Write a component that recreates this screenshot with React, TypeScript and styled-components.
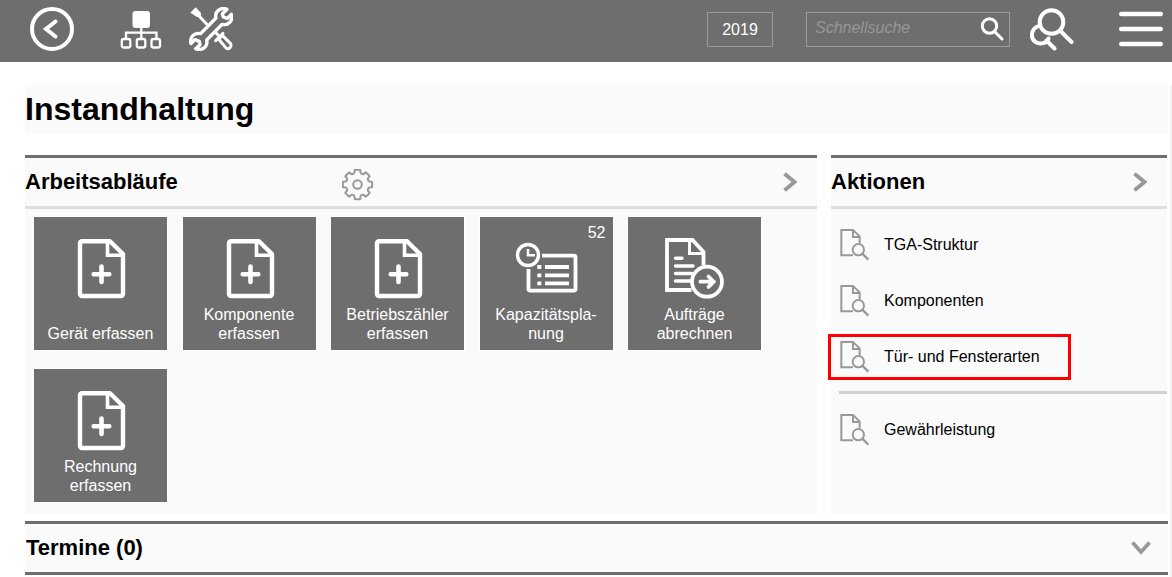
import React from 'react';
import styled, { createGlobalStyle } from 'styled-components';

const GREY = '#6e6e6e';
const PANEL = '#fafafa';
const MUTED = '#999999';

const GlobalStyle = createGlobalStyle`
  *, *::before, *::after { box-sizing: border-box; }
  body {
    margin: 0;
    background: #ffffff;
    color: #000000;
    font-family: "Liberation Sans", Arial, Helvetica, sans-serif;
    font-size: 16px;
  }
  button, input { font: inherit; }
  h1, h2 { margin: 0; }
`;

const Page = styled.div`
  display: flex;
  flex-direction: column;
  min-height: 100vh;
`;

const TopBar = styled.header`
  display: flex;
  align-items: center;
  height: 62px;
  padding: 0 9px 4px 30px;
  background: ${GREY};
`;

const BarGroup = styled.div<{ $gap: number; $push?: boolean }>`
  display: flex;
  align-items: center;
  gap: ${(p) => p.$gap}px;
  margin-left: ${(p) => (p.$push ? 'auto' : '0')};
`;

const IconButton = styled.button`
  display: flex;
  padding: 0;
  border: 0;
  background: none;
  color: inherit;
  cursor: pointer;
`;

const BarButton = styled(IconButton)<{ $before?: number }>`
  margin-left: ${(p) => p.$before ?? 0}px;
  color: #ffffff;
`;

const YearButton = styled.button`
  width: 66px;
  height: 35px;
  padding: 2px 0 0;
  border: 1px solid #999999;
  background: none;
  color: #ffffff;
  cursor: pointer;
`;

const SearchBox = styled.form`
  display: flex;
  align-items: center;
  width: 204px;
  height: 35px;
  padding: 0 5px 0 8px;
  border: 1px solid #999999;
  color: #ffffff;
`;

const SearchInput = styled.input`
  flex: 1;
  min-width: 0;
  height: 31px;
  padding: 0 0 3px;
  border: 0;
  outline: 0;
  background: none;
  color: #ffffff;
  font-style: italic;
  &::placeholder { color: #979797; opacity: 1; }
`;

const Main = styled.main`
  flex: 1;
  margin-top: 23px;
  padding: 0 2px 2px 25px;
  border-right: 2px solid #f3f3f3;
`;

const PageTitle = styled.h1`
  padding: 0 0 1px;
  background: ${PANEL};
  font-size: 32px;
  line-height: 48px;
`;

const Panels = styled.div`
  display: grid;
  grid-template-columns: minmax(0, 792fr) minmax(0, 336fr);
  gap: 14px;
  margin: 21px 1px 7px 0;
`;

const Panel = styled.section`
  border-top: 3px solid ${GREY};
  background: ${PANEL};
`;

const PanelHead = styled.div<{ $line: string; $end: number }>`
  display: flex;
  align-items: center;
  height: 51px;
  padding-right: ${(p) => p.$end}px;
  border-bottom: 3px solid ${(p) => p.$line};
  color: ${MUTED};
`;

const PanelTitle = styled.h2`
  flex: 0 0 41%;
  color: #000000;
  font-size: 22px;
  line-height: 48px;
`;

const Settings = styled(IconButton)`
  padding-top: 5px;
`;

const Toggle = styled(IconButton)`
  margin-left: auto;
`;

const Tiles = styled.div`
  display: grid;
  grid-template-columns: repeat(auto-fill, 133px);
  justify-content: space-between;
  gap: 19px 15px;
  padding: 8px 56px 12px 9px;
`;

const Tile = styled.button`
  position: relative;
  display: flex;
  flex-direction: column;
  align-items: center;
  justify-content: space-between;
  height: 133px;
  padding: 20px 8px 7px;
  border: 0;
  background: ${GREY};
  box-shadow: 0 0 0 1px #ffffff;
  color: #ffffff;
  line-height: 19px;
  cursor: pointer;
`;

const TileIcon = styled.svg`
  flex: none;
  width: 65px;
  height: 64px;
  margin-bottom: -20px;
`;

const TileCount = styled.span`
  position: absolute;
  top: 6px;
  right: 7px;
`;

const ActionList = styled.ul`
  margin: 0;
  padding: 7px 0 56px 8px;
  list-style: none;
`;

const ActionItem = styled.li<{ $divided?: boolean }>`
  ${(p) => p.$divided && 'margin-top: 7px; padding-top: 7px; border-top: 3px solid #cdd3d4;'}
`;

const ActionLink = styled.a<{ $marked?: boolean }>`
  position: relative;
  display: flex;
  align-items: center;
  gap: 14px;
  height: 56px;
  padding: 2px 0 0 1px;
  color: #000000;
  text-decoration: none;
  ${(p) =>
    p.$marked &&
    `&::after {
      content: "";
      position: absolute;
      top: 6px;
      left: -11px;
      width: 243px;
      height: 46px;
      border: 3px solid #ff0000;
    }`}
`;

const Closed = styled(Panel)`
  h2 { padding-left: 1px; }
`;

const BackIcon = () => (
  <svg width="44" height="44" viewBox="0 0 44 44" fill="none" stroke="currentColor" strokeWidth="4">
    <circle cx="22" cy="22" r="20" />
    <path d="M25.500 14.500 16 22l9.500 7.500" strokeLinecap="round" />
  </svg>
);

const SitemapIcon = () => (
  <svg width="42" height="44" viewBox="0 0 42 44" fill="none" stroke="currentColor" strokeWidth="2.300">
    <rect x="12.500" y="4" width="17.500" height="17" rx="3" fill="currentColor" stroke="none" />
    <path d="M21.300 20v12M6 32v-6.300h30.500V32" />
    <rect x="1.800" y="32" width="8.500" height="8.500" rx="2" />
    <rect x="16.800" y="32" width="8.500" height="8.500" rx="2" />
    <rect x="31.500" y="32" width="8.500" height="8.500" rx="2" />
  </svg>
);

const ToolsIcon = () => (
  <svg width="44" height="44" viewBox="12 21 132 132" fill="none" stroke="currentColor" strokeWidth="10" strokeLinejoin="round" strokeLinecap="round">
    <path d="M126 28C108 20 88 34 93 54L47 101C28 96 13 112 18 131L30 119L43 124L45 134L32 146C50 154 70 140 65 120L111 73C130 78 145 62 139 43L127 55L115 51L112 41Z" />
    <path d="M16 38 32 22 48 39 47 51 36 51Z" fill="currentColor" stroke="none" />
    <path d="M40 46 67 74M92 98l10 10" strokeWidth="9" />
    <path d="M92 122 114 100" strokeWidth="9" />
    <path d="M101 117 112 106 136 130C142 141 131 151 122 143Z" strokeWidth="9" />
  </svg>
);

const SearchIcon = () => (
  <svg width="24" height="24" viewBox="0 0 24 24" fill="none" stroke="currentColor" strokeWidth="3">
    <circle cx="9.500" cy="9" r="7.200" />
    <path d="m14.500 14.500 7.500 7.500" strokeLinecap="round" />
  </svg>
);

const DoubleSearchIcon = () => (
  <svg width="44" height="44" viewBox="0 0 44 44" fill="none" stroke="currentColor" strokeWidth="4" strokeLinecap="round">
    <circle cx="21.500" cy="15" r="11.800" />
    <path d="m30.500 24 11 11M7.500 19.500C1 22.500 0 31 5.500 35 10.500 38 17 36 18.500 31.500M16.500 33.500l8 8" />
  </svg>
);

const MenuIcon = () => (
  <svg width="44" height="44" viewBox="0 0 44 44" stroke="currentColor" strokeWidth="4.600" strokeLinecap="round">
    <path d="M2.300 7h39.400M2.300 22h39.400M2.300 37h39.400" />
  </svg>
);

const gearPath = (() => {
  const at = (radius: number, degrees: number) => {
    const angle = (degrees * Math.PI) / 180;
    return `${(15.5 + radius * Math.cos(angle)).toFixed(2)} ${(15.5 + radius * Math.sin(angle)).toFixed(2)}`;
  };
  const teeth = Array.from({ length: 8 }, (_, i) => {
    const a = i * 45;
    return `${i ? 'L' : 'M'}${at(12.3, a - 14)}L${at(14.7, a - 11)}Q${at(15, a)} ${at(14.7, a + 11)}L${at(12.3, a + 14)}Q${at(10.6, a + 22.5)} ${at(12.3, a + 31)}`;
  });
  return teeth.join('') + 'Z';
})();

const GearIcon = () => (
  <svg width="32" height="32" viewBox="0 0 32 32" fill="none" stroke="currentColor" strokeWidth="2" strokeLinejoin="round">
    <path d={gearPath} />
    <circle cx="15.500" cy="15.500" r="4.300" />
  </svg>
);

const ChevronRight = () => (
  <svg width="14" height="20" viewBox="0 0 14 20" fill="none" stroke="currentColor" strokeWidth="3.800">
    <path d="m1.500 1.800 10 8.200-10 8.200" />
  </svg>
);

const ChevronDown = () => (
  <svg width="20" height="14" viewBox="0 0 20 14" fill="none" stroke="currentColor" strokeWidth="3.800">
    <path d="m1.500 1.500 8.500 9.500 8.500-9.500" />
  </svg>
);

const AddDocument = () => (
  <TileIcon viewBox="0 0 65 64" fill="none" stroke="currentColor" strokeWidth="4.400" strokeLinejoin="round">
    <path d="M14 4.200h28L55 17V57a2 2 0 0 1-2 2H14a2 2 0 0 1-2-2V6.200a2 2 0 0 1 2-2Z" />
    <path d="M39.500 5v13.200H55" strokeWidth="3.600" strokeLinejoin="miter" />
    <path d="M33.500 29.500v15.500M25.700 37.200h15.600" strokeWidth="4.600" strokeLinecap="round" />
  </TileIcon>
);

const Schedule = () => (
  <TileIcon viewBox="0 0 65 64" fill="none" stroke="currentColor" strokeWidth="3.800">
    <circle cx="14" cy="18" r="10.500" strokeWidth="3.400" />
    <path d="M14 12v6.300h7" strokeWidth="2.600" />
    <path d="M28 18.700h32a1.500 1.500 0 0 1 1.500 1.500v32a1.500 1.500 0 0 1-1.500 1.500H16a1.500 1.500 0 0 1-1.500-1.500V32" />
    <path d="M23.300 30h4M31 30h24M23.300 38.300h4M31 38.300h24M23.300 46.300h4M31 46.300h24" strokeWidth="3.800" />
  </TileIcon>
);

const Invoice = () => (
  <TileIcon viewBox="0 0 65 64" fill="none" stroke="currentColor" strokeWidth="3.800">
    <path d="M29.500 53H5V3h25.500L41.500 15V28" />
    <path d="M27.500 4v12.500h14" strokeWidth="3" />
    <path d="M13.500 21.300H20M13.500 29H31M13.500 36.500H30M13.500 44H28" strokeWidth="3.400" strokeLinecap="round" />
    <circle cx="45" cy="44.700" r="15" />
    <path d="M38.500 44.700H51M46.500 39.500l5.200 5.200-5.200 5.200" strokeLinecap="round" />
  </TileIcon>
);

const LookupIcon = () => (
  <svg width="30" height="33" viewBox="62 253 90 99" fill="none" stroke={MUTED} strokeWidth="6">
    <path d="M101 332H66V256H101L121 275V296M101 256V277H121" />
    <circle cx="117" cy="315" r="17" />
    <path d="m129 327 18 18" strokeWidth="7" />
  </svg>
);

const tiles = [
  { label: 'Gerät erfassen', Icon: AddDocument },
  { label: 'Komponente erfassen', Icon: AddDocument },
  { label: 'Betriebszähler erfassen', Icon: AddDocument },
  { label: 'Kapazitätspla-nung', Icon: Schedule, count: 52 },
  { label: 'Aufträge abrechnen', Icon: Invoice },
  { label: 'Rechnung erfassen', Icon: AddDocument },
];

const actions = [
  { label: 'TGA-Struktur' },
  { label: 'Komponenten' },
  { label: 'Tür- und Fensterarten', marked: true },
  { label: 'Gewährleistung', divided: true },
];

export default function App() {
  return (
    <Page>
      <GlobalStyle />
      <TopBar>
        <BarGroup $gap={0}>
          <BarButton aria-label="Zurück"><BackIcon /></BarButton>
          <BarButton $before={46} aria-label="Struktur"><SitemapIcon /></BarButton>
          <BarButton $before={27} aria-label="Werkzeuge"><ToolsIcon /></BarButton>
        </BarGroup>
        <BarGroup $gap={33} $push>
          <YearButton>2019</YearButton>
          <SearchBox onSubmit={(e) => e.preventDefault()}>
            <SearchInput type="text" placeholder="Schnellsuche" aria-label="Schnellsuche" />
            <BarButton type="submit" aria-label="Suchen"><SearchIcon /></BarButton>
          </SearchBox>
        </BarGroup>
        <BarButton $before={20} aria-label="Erweiterte Suche"><DoubleSearchIcon /></BarButton>
        <BarButton $before={45} aria-label="Menü"><MenuIcon /></BarButton>
      </TopBar>
      <Main>
        <PageTitle>Instandhaltung</PageTitle>
        <Panels>
          <Panel>
            <PanelHead $line="#dedede" $end={20}>
              <PanelTitle>Arbeitsabläufe</PanelTitle>
              <Settings aria-label="Einstellungen"><GearIcon /></Settings>
              <Toggle aria-label="Arbeitsabläufe öffnen"><ChevronRight /></Toggle>
            </PanelHead>
            <Tiles>
              {tiles.map(({ label, Icon, count }) => (
                <Tile key={label}>
                  <Icon />
                  {count !== undefined && <TileCount>{count}</TileCount>}
                  <span>{label}</span>
                </Tile>
              ))}
            </Tiles>
          </Panel>
          <Panel>
            <PanelHead $line="#dedede" $end={20}>
              <PanelTitle>Aktionen</PanelTitle>
              <Toggle aria-label="Aktionen öffnen"><ChevronRight /></Toggle>
            </PanelHead>
            <ActionList>
              {actions.map(({ label, marked, divided }) => (
                <ActionItem key={label} $divided={divided}>
                  <ActionLink href="#" $marked={marked}>
                    <LookupIcon />
                    {label}
                  </ActionLink>
                </ActionItem>
              ))}
            </ActionList>
          </Panel>
        </Panels>
        <Closed>
          <PanelHead $line={GREY} $end={17}>
            <PanelTitle>Termine (0)</PanelTitle>
            <Toggle aria-label="Termine aufklappen"><ChevronDown /></Toggle>
          </PanelHead>
        </Closed>
      </Main>
    </Page>
  );
}
